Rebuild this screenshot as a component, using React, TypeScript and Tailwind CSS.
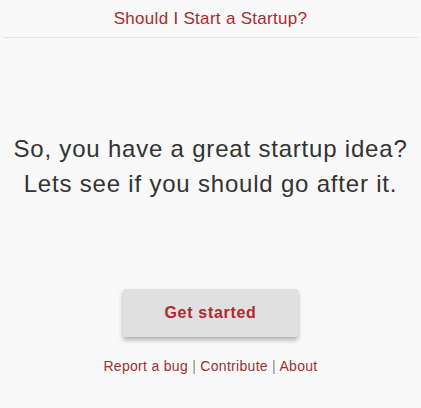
export default function App() {
  return (
    <div className="min-h-[408px] bg-[#f9f9f9] font-['Liberation_Sans',Arial,sans-serif] flex flex-col">
      <header className="mx-[3px] h-[38px] border-b border-[#e3e3e3] flex items-center justify-center">
        <h1 className="text-[17px] text-[#b0272c] tracking-[0.3px]">Should I Start a Startup?</h1>
      </header>
      <main className="flex flex-col items-center">
        <p className="mt-[93px] text-center text-[24px] leading-[35px] text-[#333] tracking-[0.8px]">
          So, you have a great startup idea?
          <br />
          Lets see if you should go after it.
        </p>
        <button className="mt-[88px] w-[175px] h-[48px] rounded-[2px] bg-[#e0e0e0] text-[#b0272c] font-bold text-[16px] tracking-[0.7px] shadow-[0_3px_5px_rgba(0,0,0,0.3)]">
          Get started
        </button>
        <nav className="mt-[19px] text-[14px] leading-[20px] text-[#888] tracking-[0.3px]">
          <a className="text-[#a03030]">Report a bug</a> | <a className="text-[#a03030]">Contribute</a> | <a className="text-[#a03030]">About</a>
        </nav>
      </main>
    </div>
  );
}
